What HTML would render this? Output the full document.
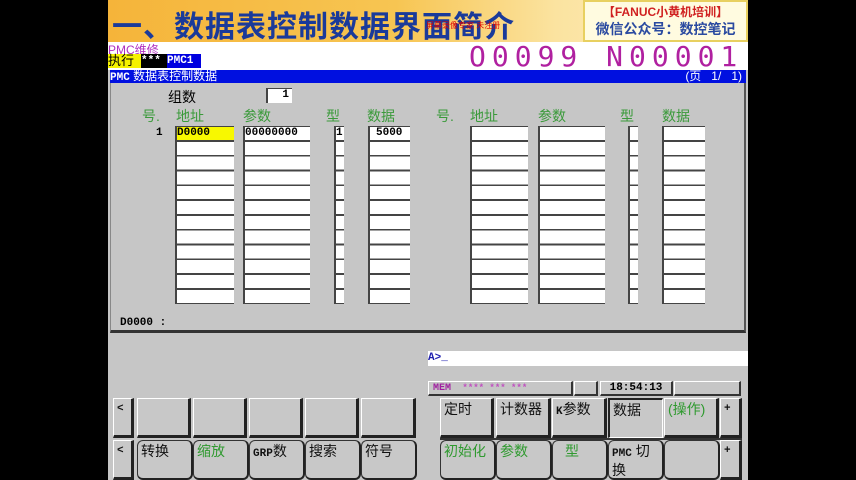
<!DOCTYPE html><html><head><meta charset="utf-8"><style>
*{margin:0;padding:0;box-sizing:border-box}
body{width:856px;height:480px;background:#000;position:relative;overflow:hidden;font-family:"Liberation Sans","Noto Sans CJK SC",sans-serif}
.a{position:absolute}
#scr{left:108px;top:0;width:640px;height:480px;background:#c6c6c6;overflow:hidden}
.m{font-family:"Liberation Mono","Noto Sans CJK SC",monospace;font-weight:bold}
.col{position:absolute;top:126px;height:178px;background-color:#fff;border-left:2px solid #444;border-top:1px solid #444;
background-image:repeating-linear-gradient(to bottom,transparent 0,transparent 13px,#444 13px,#444 14.8px)}
.hd{position:absolute;top:106px;color:#3a9a3a;font-size:14px}
.b{position:absolute;background:#c8c8c8;border:1px solid #fff;border-right:3px solid #222;border-bottom:3px solid #222;font-size:14px;line-height:16px;padding:2px 0 0 3px;color:#111}
.r{border-radius:6px;border:1px solid #333;border-right:2px solid #222;border-bottom:2px solid #222}
.g{color:#2f9a2f}
</style></head><body>
<div id="scr" class="a">
<div class="a" style="left:0;top:0;width:640px;height:42px;background:linear-gradient(90deg,#f5b43a 0%,#f7c552 45%,#fbe3a0 70%,#fff0c8 100%)"></div>
<div class="a" style="left:4px;top:2px;font-size:30px;font-weight:bold;color:#1a3a9a;letter-spacing:1px;white-space:nowrap">一、数据表控制数据界面简介</div>
<div class="a" style="left:318px;top:20px;font-size:8px;color:#d00">屏幕录像专家 未注册</div>
<div class="a" style="left:475px;top:0;width:165px;height:42px;background:#fffbe0;border:2px solid #e8d060;text-align:center;font-weight:bold">
<div style="color:#d02020;font-size:12px;line-height:15px;margin-top:3px">【FANUC小黄机培训】</div>
<div style="color:#2a4aa0;font-size:14px;line-height:18px">微信公众号：数控笔记</div></div>
<div class="a" style="left:0;top:42px;width:640px;height:28px;background:#fff"></div>
<div class="a" style="left:0;top:41px;font-size:12px;color:#b030c0">PMC维修</div>
<div class="a" style="left:0;top:54px;height:14px;width:33px;background:#f5f200;font-size:13px;line-height:14px">执行</div>
<div class="a m" style="left:33px;top:54px;height:14px;width:26px;background:#000;color:#fff;font-size:11px;line-height:14px">***</div>
<div class="a m" style="left:59px;top:54px;height:14px;width:34px;background:#0000e0;color:#fff;font-size:11px;line-height:14px">PMC1</div>
<div class="a" style="left:361px;top:40px;font-family:'DejaVu Sans Mono',monospace;font-size:28px;color:#b020a0;letter-spacing:6px;white-space:nowrap">O0099 N00001</div>
<div class="a" style="left:2px;top:70px;width:636px;height:263px;border:1px solid #888;border-bottom:3px solid #333;border-right:2px solid #555"></div>
<div class="a" style="left:2px;top:70px;width:636px;height:13px;background:#0010e0;color:#fff;font-size:12px;line-height:13px;white-space:nowrap"><span class="m" style="font-size:11px">PMC</span> 数据表控制数据<span style="position:absolute;right:4px">(页&nbsp;&nbsp;&nbsp;1/&nbsp;&nbsp;&nbsp;1)</span></div>
<div class="a" style="left:60px;top:87px;font-size:14px">组数</div>
<div class="a m" style="left:158px;top:88px;width:26px;height:15px;background:#fff;border-left:2px solid #444;border-top:1px solid #444;font-size:11px;text-align:right;padding-right:3px">1</div>
<div class="hd" style="left:34px">号.</div><div class="hd" style="left:68px">地址</div><div class="hd" style="left:135px">参数</div><div class="hd" style="left:218px">型</div><div class="hd" style="left:259px">数据</div>
<div class="hd" style="left:328px">号.</div><div class="hd" style="left:362px">地址</div><div class="hd" style="left:430px">参数</div><div class="hd" style="left:512px">型</div><div class="hd" style="left:554px">数据</div>
<div class="col" style="left:67px;width:59px"></div><div class="col" style="left:135px;width:67px"></div><div class="col" style="left:226px;width:10px"></div><div class="col" style="left:260px;width:42px"></div>
<div class="col" style="left:362px;width:58px"></div><div class="col" style="left:430px;width:67px"></div><div class="col" style="left:520px;width:10px"></div><div class="col" style="left:554px;width:43px"></div>
<div class="a m" style="left:48px;top:127px;font-size:11px">1</div>
<div class="a m" style="left:69px;top:127px;width:57px;height:13px;background:#f8f800;font-size:11px;line-height:13px">D0000</div>
<div class="a m" style="left:137px;top:127px;font-size:11px;line-height:13px">00000000</div>
<div class="a m" style="left:228px;top:127px;font-size:11px;line-height:13px">1</div>
<div class="a m" style="left:268px;top:127px;font-size:11px;line-height:13px">5000</div>
<div class="a m" style="left:12px;top:317px;font-size:11px">D0000 :</div>
<div class="a" style="left:320px;top:351px;width:320px;height:15px;background:#fff;color:#2020b0;font-size:11px;line-height:15px;font-family:'Liberation Mono',monospace;font-weight:bold">A&gt;_</div>
<div class="a m" style="left:320px;top:381px;width:145px;height:15px;border:1px solid #fff;border-right:2px solid #333;border-bottom:2px solid #333;font-size:10px;line-height:13px;color:#a020a0;padding-left:4px">MEM <span style="color:#c050c0;font-size:9px">&nbsp;**** *** ***</span></div>
<div class="a" style="left:466px;top:381px;width:24px;height:15px;border:1px solid #fff;border-right:2px solid #333;border-bottom:2px solid #333"></div>
<div class="a m" style="left:492px;top:381px;width:73px;height:15px;border:1px solid #fff;border-right:2px solid #333;border-bottom:2px solid #333;font-size:11px;line-height:13px;text-align:center">18:54:13</div>
<div class="a" style="left:566px;top:381px;width:67px;height:15px;border:1px solid #fff;border-right:2px solid #333;border-bottom:2px solid #333"></div>
<div class="b m" style="left:5px;top:398px;width:21px;height:40px;font-size:11px">&lt;</div>
<div class="b" style="left:29px;top:398px;width:54px;height:40px"></div>
<div class="b" style="left:85px;top:398px;width:54px;height:40px"></div>
<div class="b" style="left:141px;top:398px;width:54px;height:40px"></div>
<div class="b" style="left:197px;top:398px;width:54px;height:40px"></div>
<div class="b" style="left:253px;top:398px;width:55px;height:40px"></div>
<div class="b m" style="left:5px;top:440px;width:21px;height:40px;font-size:11px">&lt;</div>
<div class="b r" style="left:29px;top:440px;width:56px;height:40px">转换</div>
<div class="b r g" style="left:85px;top:440px;width:56px;height:40px">缩放</div>
<div class="b r" style="left:141px;top:440px;width:56px;height:40px"><span class="m" style="font-size:11px">GRP</span>数</div>
<div class="b r" style="left:197px;top:440px;width:56px;height:40px">搜索</div>
<div class="b r" style="left:253px;top:440px;width:56px;height:40px">符号</div>
<div class="b" style="left:332px;top:398px;width:54px;height:40px">定时</div>
<div class="b" style="left:388px;top:398px;width:55px;height:40px">计数器</div>
<div class="b" style="left:444px;top:398px;width:55px;height:40px"><span class="m" style="font-size:11px">K</span>参数</div>
<div class="b" style="left:500px;top:398px;width:55px;height:40px;border:2px solid #222;border-right:1px solid #fff;border-bottom:1px solid #fff">数据</div>
<div class="b g" style="left:556px;top:398px;width:55px;height:40px">(操作)</div>
<div class="b m" style="left:612px;top:398px;width:22px;height:40px;font-size:11px">+</div>
<div class="a" style="left:332px;top:438px;width:302px;height:2px;background:#333"></div>
<div class="b r g" style="left:332px;top:440px;width:56px;height:40px">初始化</div>
<div class="b r g" style="left:388px;top:440px;width:56px;height:40px">参数</div>
<div class="b r g" style="left:444px;top:440px;width:56px;height:40px;padding-left:12px">型</div>
<div class="b r" style="left:500px;top:440px;width:56px;height:40px"><span class="m" style="font-size:11px">PMC</span> 切<br>换</div>
<div class="b r" style="left:556px;top:440px;width:56px;height:40px"></div>
<div class="b m" style="left:612px;top:440px;width:22px;height:40px;font-size:11px">+</div>
</div>
</body></html>
